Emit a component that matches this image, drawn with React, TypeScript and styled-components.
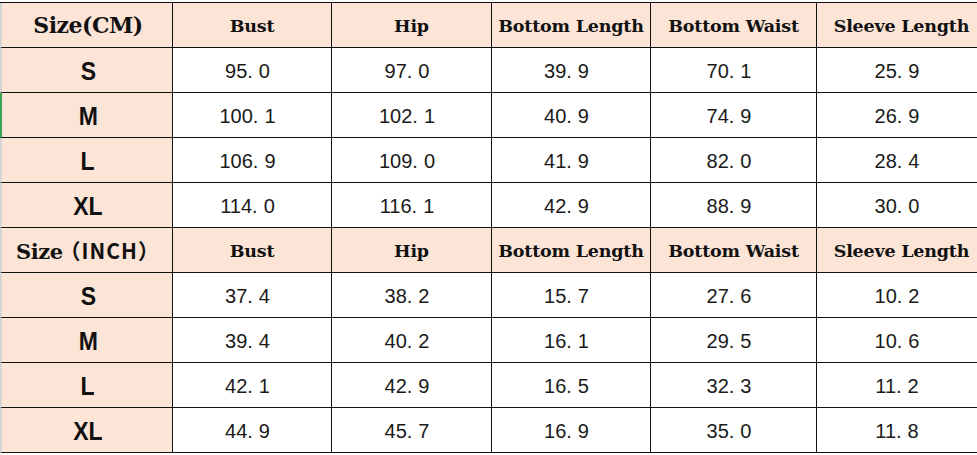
import React from "react";
import styled, { createGlobalStyle } from "styled-components";

const GlobalStyle = createGlobalStyle`
  html, body {
    margin: 0;
    padding: 0;
    background: #ffffff;
    overflow: hidden;
  }
`;

const columns = ["Bust", "Hip", "Bottom Length", "Bottom Waist", "Sleeve Length"];

const cmRows = [
  { size: "S", values: ["95.0", "97.0", "39.9", "70.1", "25.9"] },
  { size: "M", values: ["100.1", "102.1", "40.9", "74.9", "26.9"] },
  { size: "L", values: ["106.9", "109.0", "41.9", "82.0", "28.4"] },
  { size: "XL", values: ["114.0", "116.1", "42.9", "88.9", "30.0"] },
];

const inchRows = [
  { size: "S", values: ["37.4", "38.2", "15.7", "27.6", "10.2"] },
  { size: "M", values: ["39.4", "40.2", "16.1", "29.5", "10.6"] },
  { size: "L", values: ["42.1", "42.9", "16.5", "32.3", "11.2"] },
  { size: "XL", values: ["44.9", "45.7", "16.9", "35.0", "11.8"] },
];

const Page = styled.div`
  width: 977px;
  height: 455px;
  overflow: hidden;
  padding-top: 2px;
  box-sizing: border-box;
`;

const Grid = styled.div`
  display: grid;
  grid-template-columns: 173px 159px 160px 159px 166px 170px;
  grid-auto-rows: 45px;
  width: 987px;
  border-top: 1px solid #111;
`;

const Cell = styled.div<{ $pink?: boolean; $first?: boolean; $mark?: boolean; $num?: boolean }>`
  box-sizing: border-box;
  display: flex;
  align-items: center;
  justify-content: center;
  border-right: 1px solid #111;
  border-bottom: 1px solid #111;
  background: ${(p) => (p.$pink ? "#fce4d6" : "#ffffff")};
  border-left: ${(p) =>
    p.$first ? `2px solid ${p.$mark ? "#3aa655" : "#d4d4d4"}` : "none"};
  padding-left: ${(p) => (p.$first ? "2px" : "0")};
  padding-right: ${(p) => (p.$num ? "9px" : "0")};
  padding-top: ${(p) => (p.$num ? "2px" : "0")};
  color: #111;
  white-space: nowrap;
`;

const HeadText = styled.span`
  font-family: "DejaVu Serif", "Liberation Serif", serif;
  font-weight: 700;
  font-size: 17.5px;
  letter-spacing: -0.2px;
  margin-top: 2px;
`;

const TitleText = styled.span<{ $small?: boolean }>`
  font-family: "DejaVu Serif", "Liberation Serif", serif;
  font-weight: 700;
  font-size: ${(p) => (p.$small ? "21px" : "22px")};
  letter-spacing: -0.5px;
`;

const CjkPart = styled.span`
  font-family: "Noto Sans CJK SC", "DejaVu Sans", sans-serif;
  font-weight: 700;
  font-size: 21px;
  letter-spacing: 1px;
  margin-left: -3px;
`;

const SizeText = styled.span`
  font-family: "Liberation Sans", "Noto Sans CJK SC", sans-serif;
  font-weight: 700;
  font-size: 25px;
  margin-top: 2px;
  transform: scaleX(0.92);
`;

const NumText = styled.span`
  font-family: "Liberation Sans", Arial, sans-serif;
  font-size: 20px;
  color: #1a1a1a;
`;

const Dot = styled.span`
  margin-right: 6px;
`;

const Num = ({ value }: { value: string }) => {
  const [whole, frac] = value.split(".");
  return (
    <NumText>
      {whole}
      <Dot>.</Dot>
      {frac}
    </NumText>
  );
};

const HeaderRow = ({ title }: { title: React.ReactNode }) => (
  <>
    <Cell $pink $first>
      {title}
    </Cell>
    {columns.map((c) => (
      <Cell key={c} $pink>
        <HeadText>{c}</HeadText>
      </Cell>
    ))}
  </>
);

const DataRow = ({
  size,
  values,
  mark,
}: {
  size: string;
  values: string[];
  mark?: boolean;
}) => (
  <>
    <Cell $pink $first $mark={mark}>
      <SizeText>{size}</SizeText>
    </Cell>
    {values.map((v, i) => (
      <Cell key={i} $num>
        <Num value={v} />
      </Cell>
    ))}
  </>
);

export default function App() {
  return (
    <>
      <GlobalStyle />
      <Page>
        <Grid>
          <HeaderRow title={<TitleText>Size(CM)</TitleText>} />
          {cmRows.map((r, i) => (
            <DataRow key={"cm" + r.size} size={r.size} values={r.values} mark={i === 1} />
          ))}
          <HeaderRow
            title={
              <TitleText $small>
                Size<CjkPart>（INCH）</CjkPart>
              </TitleText>
            }
          />
          {inchRows.map((r) => (
            <DataRow key={"in" + r.size} size={r.size} values={r.values} />
          ))}
        </Grid>
      </Page>
    </>
  );
}
